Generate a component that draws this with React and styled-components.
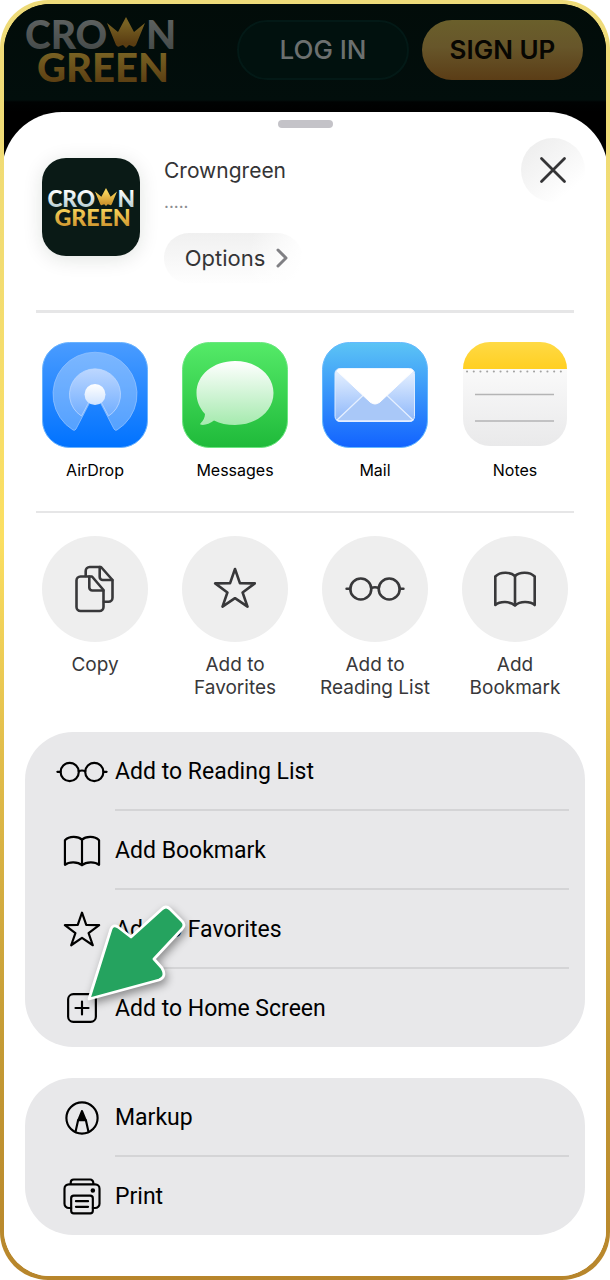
import React from "react";
import styled, { createGlobalStyle, css } from "styled-components";

const GlobalStyle = createGlobalStyle`
  *, *::before, *::after { box-sizing: border-box; }
  body {
    margin: 0;
    background: #fff;
    font-family: Inter, "Liberation Sans", sans-serif;
    color: #000;
  }
  button {
    font: inherit;
    color: inherit;
    border: 0;
    padding: 0;
    background: none;
    cursor: pointer;
  }
  ul { list-style: none; margin: 0; padding: 0; }
  svg { display: block; flex: none; overflow: visible; }
`;

const Frame = styled.div`
  min-height: 100vh;
  display: flex;
  padding: 4px;
  border-radius: 48px;
  background: linear-gradient(180deg, #eedb7a 0%, #f2dc72 20%, #fbdf62 42%, #e3bf4c 58%, #c49a34 82%, #b7852b 100%);
`;

const Screen = styled.div`
  flex: 1;
  min-width: 0;
  display: flex;
  flex-direction: column;
  overflow: hidden;
  border-radius: 46px;
  background: linear-gradient(#000 200px, #fff 200px);
`;

const SiteHeader = styled.header`
  height: 108px;
  padding: 13px 23px 0 22px;
  display: flex;
  justify-content: space-between;
  align-items: flex-start;
  background: linear-gradient(#020c09 0, #020e0c 96px, #000202 98px, #000 100%);
`;

const HeaderActions = styled.div`
  display: flex;
  gap: 13px;
  padding-top: 3px;
`;

const HeaderButton = styled.button`
  height: 60px;
  width: ${(p) => (p.$primary ? "161px" : "172px")};
  border-radius: 30px;
  font-size: 26px;
  line-height: 32px;
  ${(p) =>
    p.$primary
      ? css`
          font-weight: 600;
          color: #070602;
          background: linear-gradient(#6a5f2b, #67562a 45%, #5b3d16);
        `
      : css`
          font-weight: 500;
          color: #6c706f;
          background: #01110e;
          border: 2px solid #031916;
        `}
`;

const Sheet = styled.main`
  flex: 1;
  margin: 0 -2px;
  padding: 8px 23px 41px;
  border-radius: 60px 60px 0 0;
  background: #fff;
`;

const Handle = styled.div`
  width: 55px;
  height: 8px;
  margin: 0 auto;
  border-radius: 4px;
  background: #c4c3c8;
`;

const SiteInfo = styled.section`
  height: 182px;
  padding: 10px 0 0 17px;
  display: flex;
  align-items: flex-start;
`;

const AppIcon = styled.div`
  width: 98px;
  height: 98px;
  margin-top: 20px;
  display: grid;
  place-items: center;
  border-radius: 24px;
  background: #0a1a16;
  box-shadow: 0 3px 20px rgba(0, 30, 20, 0.12);
`;

const SiteText = styled.div`
  flex: 1;
  padding: 18px 0 0 24px;
`;

const SiteName = styled.h1`
  margin: 0;
  font-size: 21px;
  line-height: 30px;
  font-weight: 400;
  color: #343436;
`;

const SiteAddress = styled.p`
  margin: 0;
  font-size: 17px;
  line-height: 32px;
  color: #8c8c90;
`;

const OptionsButton = styled.button`
  height: 50px;
  width: 138px;
  margin-top: 15px;
  padding-left: 8px;
  display: flex;
  align-items: center;
  justify-content: center;
  gap: 10px;
  border-radius: 25px;
  font-size: 22px;
  color: #343436;
  background: linear-gradient(100deg, transparent 60%, #fff 98%), linear-gradient(#f0f0f0, #f7f7f7 50%, #fefefe);
`;

const CloseButton = styled.button`
  width: 64px;
  height: 64px;
  display: grid;
  place-items: center;
  border-radius: 32px;
  background: linear-gradient(140deg, #efefef 15%, #f7f7f7 50%, #fff 80%);
`;

const Divider = styled.hr`
  height: ${(p) => (p.$thin ? "2px" : "3px")};
  margin: 0 11px;
  border: 0;
  background: #e6e6e7;
`;

const Grid = styled.ul`
  display: grid;
  grid-template-columns: repeat(4, 1fr);
  padding: ${(p) => (p.$apps ? "29px 0 30px" : "23px 0 0")};
`;

const TileButton = styled.button`
  width: 100%;
  display: flex;
  flex-direction: column;
  align-items: center;
  gap: 11px;
  font-size: ${(p) => (p.$app ? "16px" : "19px")};
  line-height: ${(p) => (p.$app ? "22px" : "23px")};
  color: ${(p) => (p.$app ? "#000" : "#38383a")};
`;

const TileLabel = styled.span`
  min-height: ${(p) => p.$lines * 23}px;
  white-space: pre-line;
`;

const Circle = styled.span`
  width: 106px;
  height: 106px;
  display: grid;
  place-items: center;
  border-radius: 50%;
  background: #eeeeee;
`;

const Panel = styled.ul`
  margin-top: ${(p) => (p.$first ? "33px" : "31px")};
  border-radius: 48px;
  background: #e8e8ea;
`;

const PanelItem = styled.li`
  position: relative;
`;

const PanelButton = styled.button`
  width: 100%;
  height: 79px;
  padding: 0 16px 0 31px;
  display: flex;
  align-items: center;
  gap: 7px;
  text-align: left;
  font-family: Roboto, "Liberation Sans", sans-serif;
  font-size: 23px;
  ${PanelItem}:last-child & {
    height: 78px;
  }
`;

const PanelLabel = styled.span`
  flex: 1;
  align-self: stretch;
  display: flex;
  align-items: center;
  ${PanelItem}:not(:last-child) & {
    box-shadow: inset 0 -2px #d4d4d6;
  }
`;

const Pointer = styled.svg`
  position: absolute;
  top: -74px;
  left: 55px;
  z-index: 1;
  pointer-events: none;
  filter: drop-shadow(2px 4px 4px rgba(0, 0, 0, 0.4));
`;

function Logo({ width, id, dim }) {
  const gold = `${id}-gold`;
  const silver = `${id}-silver`;
  const word = { fontFamily: "Lato, 'Liberation Sans', sans-serif", fontWeight: 900 };
  return (
    <svg width={width} viewBox="0 0 150 67" role="img" aria-label="Crown Green">
      <defs>
        <linearGradient id={gold} x1="0" y1="0" x2="0" y2="1">
          <stop offset="0.2" stopColor={dim ? "#786223" : "#f8d45c"} />
          <stop offset="0.85" stopColor={dim ? "#5a3d12" : "#d09830"} />
        </linearGradient>
        <linearGradient id={silver} x1="0" y1="0" x2="0" y2="1">
          <stop offset="0.2" stopColor={dim ? "#5c605f" : "#ffffff"} />
          <stop offset="0.85" stopColor={dim ? "#464b4a" : "#b9cdd2"} />
        </linearGradient>
      </defs>
      <text x="-1" y="32" fontSize="39" style={word} fill={`url(#${silver})`}>CRO</text>
      <text x="120" y="32" fontSize="39" style={word} fill={`url(#${silver})`}>N</text>
      <path
        d="M81 6L92 15L100 0L108 15L119 6L110 28Q108 31 106 29L103 28L100 31L97 28L94 29Q92 31 90 28Z"
        fill={`url(#${gold})`}
      />
      <text x="11" y="65" fontSize="40" style={word} fill={`url(#${gold})`}>GREEN</text>
    </svg>
  );
}

const glyphs = {
  copy: (
    <>
      <path d="M27 17.5H15.5a4 4 0 0 0-4 4V48a4 4 0 0 0 4 4H34.5a4 4 0 0 0 4-4V31Z" />
      <path d="M24.3 17.5V28.5a3 3 0 0 0 3 3H38.3" />
      <path d="M20.7 17V12a4 4 0 0 1 4-4H36L47.5 21V38.7a4 4 0 0 1-4 4H39" />
      <path d="M34.7 8V18a3 3 0 0 0 3 3H47.3" />
    </>
  ),
  star: <path d="M30 10L34.9 24.2L49.8 24.4L37.6 33.5L42.5 47.6L30 39.2L17.5 47.6L22.4 33.5L10.2 24.4L25.1 24.2Z" />,
  glasses: (
    <>
      <circle cx="15.8" cy="30" r="10.5" />
      <circle cx="44.2" cy="30" r="10.5" />
      <path d="M26.2 29Q30 27.6 33.8 29M1.6 29.8H5.3M54.7 29.8H58.4" />
    </>
  ),
  book: (
    <>
      <path d="M30 17C26 13 15.5 12 10.3 17.5V46C15 42 25 42 30 46.5C35 42 45 42 49.7 46V17.5C44.5 12 34 13 30 17Z" />
      <path d="M30 17V46" />
    </>
  ),
  add: (
    <>
      <rect x="14" y="14" width="32" height="32" rx="6" />
      <path d="M30 22.5V37.5M22.5 30H37.5" />
    </>
  ),
  markup: (
    <>
      <circle cx="30" cy="30" r="18" />
      <path d="M22.5 46L25.5 32.5H34.5L37.5 46" />
      <path d="M30 22L26 32H34Z" fill="currentColor" />
    </>
  ),
  print: (
    <>
      <path d="M17 16V14.5a3.5 3.5 0 0 1 3.5-3.5H39.5a3.5 3.5 0 0 1 3.5 3.5V16" />
      <path d="M17.5 43.8H14.8a5 5 0 0 1-5-5V21.5a5 5 0 0 1 5-5H45.2a5 5 0 0 1 5 5V38.8a5 5 0 0 1-5 5H42.5" />
      <rect x="17.5" y="29.5" width="25" height="20.5" rx="3" />
      <path d="M23 36H37M23 42.5H37" />
      <circle cx="42.5" cy="23.7" r="1.4" fill="currentColor" />
    </>
  ),
};

function Glyph({ name, size, stroke }) {
  return (
    <svg
      width={size}
      height={size}
      viewBox="0 0 60 60"
      fill="none"
      stroke="currentColor"
      strokeWidth={stroke}
      strokeLinecap="round"
      strokeLinejoin="round"
      aria-hidden="true"
    >
      {glyphs[name]}
    </svg>
  );
}

function Gradient({ id, from, to }) {
  return (
    <linearGradient id={id} x1="0" y1="0" x2="0" y2="1">
      <stop offset="0" stopColor={from} />
      <stop offset="1" stopColor={to} />
    </linearGradient>
  );
}

const appArt = {
  AirDrop: (
    <>
      <defs>
        <Gradient id="air-bg" from="#4a9cff" to="#0072ff" />
        <Gradient id="air-mid" from="#cfe0ff" to="#76b0ff" />
        <Gradient id="air-dot" from="#ffffff" to="#cfe3ff" />
      </defs>
      <rect x="0.5" y="0.5" width="105" height="105" rx="27" fill="url(#air-bg)" stroke="#69b3ff" />
      <path d="M31 88A42 42 0 1 1 75 88Q73 89 72 87L58 60H48L34 87Q33 89 31 88Z" fill="#fff" fillOpacity="0.3" stroke="#8fc0ff" strokeWidth="0.8" />
      <path d="M39.5 74A25.5 25.5 0 1 1 66.5 74L59 60H47Z" fill="url(#air-mid)" fillOpacity="0.8" stroke="#bcd8ff" strokeWidth="0.8" />
      <circle cx="53" cy="52.5" r="10.5" fill="url(#air-dot)" />
    </>
  ),
  Messages: (
    <>
      <defs>
        <Gradient id="msg-bg" from="#55ea68" to="#1fba3a" />
        <Gradient id="msg-bubble" from="#ffffff" to="#a5eaae" />
      </defs>
      <rect x="0.5" y="0.5" width="105" height="105" rx="27" fill="url(#msg-bg)" stroke="#6be680" />
      <path
        d="M53 19C75 19 91.5 33 91.5 51C91.5 69 75 83 53 83C45 83 38 81.5 32 78.5C28 81.5 23 83.5 19 82.8C18 82.5 18 81.7 18.8 81C21.5 78.5 23 75 23 72C17.5 66 14.5 59 14.5 51C14.5 33 31 19 53 19Z"
        fill="url(#msg-bubble)"
      />
    </>
  ),
  Mail: (
    <>
      <defs>
        <Gradient id="mail-bg" from="#5cc4f5" to="#1263ff" />
        <Gradient id="mail-body" from="#eaf3ff" to="#8db7fa" />
      </defs>
      <rect x="0.5" y="0.5" width="105" height="105" rx="27" fill="url(#mail-bg)" stroke="#65b9ff" />
      <rect x="13" y="26.5" width="79.5" height="53" rx="5" fill="url(#mail-body)" stroke="#dcebff" />
      <path d="M15 78L42 52.5L53 58L64 52.5L91 78Q90 79 88 79H18Q16 79 15 78Z" fill="#a9c8f8" stroke="#e6f0ff" strokeWidth="1.3" />
      <path d="M15 29Q16 27 20 27H86Q90 27 91 29L58 60Q53 64 48 60Z" fill="#fff" stroke="#fff" />
    </>
  ),
  Notes: (
    <>
      <defs>
        <Gradient id="note-bg" from="#ffffff" to="#e9e9ea" />
        <Gradient id="note-top" from="#ffda45" to="#ffcf22" />
        <clipPath id="note-clip">
          <rect x="1" y="0" width="104" height="104" rx="27" />
        </clipPath>
      </defs>
      <g clipPath="url(#note-clip)">
        <rect width="106" height="105" fill="url(#note-bg)" />
        <rect width="106" height="27" fill="url(#note-top)" />
      </g>
      <path d="M5 29.5H103" stroke="#a3a3a3" strokeWidth="2" strokeLinecap="round" strokeDasharray="0.1 6.6" />
      <path d="M13 52.5H92M13 79H92" stroke="#b4b4b5" strokeWidth="1.6" />
    </>
  ),
};

const apps = ["AirDrop", "Messages", "Mail", "Notes"];

const shortcuts = [
  { icon: "copy", label: "Copy" },
  { icon: "star", label: "Add to\nFavorites" },
  { icon: "glasses", label: "Add to\nReading List" },
  { icon: "book", label: "Add\nBookmark" },
];

const panels = [
  [
    { icon: "glasses", label: "Add to Reading List" },
    { icon: "book", label: "Add Bookmark" },
    { icon: "star", label: "Add to Favorites" },
    { icon: "add", label: "Add to Home Screen", highlighted: true },
  ],
  [
    { icon: "markup", label: "Markup" },
    { icon: "print", label: "Print" },
  ],
];

export default function App() {
  return (
    <>
      <GlobalStyle />
      <Frame>
        <Screen>
          <SiteHeader>
            <Logo width={150} id="header-logo" dim />
            <HeaderActions>
              <HeaderButton type="button">LOG IN</HeaderButton>
              <HeaderButton type="button" $primary>SIGN UP</HeaderButton>
            </HeaderActions>
          </SiteHeader>
          <Sheet>
            <Handle />
            <SiteInfo>
              <AppIcon>
                <Logo width={87} id="app-logo" />
              </AppIcon>
              <SiteText>
                <SiteName>Crowngreen</SiteName>
                <SiteAddress>.....</SiteAddress>
                <OptionsButton type="button">
                  Options
                  <svg width="14" height="22" viewBox="0 0 14 22" fill="none" stroke="#808084" strokeWidth="3" strokeLinecap="round" strokeLinejoin="round" aria-hidden="true">
                    <path d="M3 3L11 11L3 19" />
                  </svg>
                </OptionsButton>
              </SiteText>
              <CloseButton type="button" aria-label="Close">
                <svg width="28" height="28" viewBox="0 0 28 28" stroke="#343436" strokeWidth="2.8" strokeLinecap="round" aria-hidden="true">
                  <path d="M2.5 2.5L25.5 25.5M25.5 2.5L2.5 25.5" />
                </svg>
              </CloseButton>
            </SiteInfo>
            <Divider />
            <Grid $apps>
              {apps.map((name) => (
                <li key={name}>
                  <TileButton type="button" $app>
                    <svg width="106" height="106" viewBox="0 0 106 106" fill="none" aria-hidden="true">
                      {appArt[name]}
                    </svg>
                    <span>{name}</span>
                  </TileButton>
                </li>
              ))}
            </Grid>
            <Divider $thin />
            <Grid>
              {shortcuts.map(({ icon, label }) => (
                <li key={label}>
                  <TileButton type="button">
                    <Circle>
                      <Glyph name={icon} size={60} stroke={2.6} />
                    </Circle>
                    <TileLabel $lines={2}>{label}</TileLabel>
                  </TileButton>
                </li>
              ))}
            </Grid>
            {panels.map((items, index) => (
              <Panel key={index} $first={index === 0}>
                {items.map(({ icon, label, highlighted }) => (
                  <PanelItem key={label}>
                    <PanelButton type="button">
                      <Glyph name={icon} size={52} stroke={2.5} />
                      <PanelLabel>{label}</PanelLabel>
                    </PanelButton>
                    {highlighted && (
                      <Pointer width="120" height="115" viewBox="80 895 120 115" aria-hidden="true">
                        <path
                          d="M89 999L111 929Q113 924 118 927L131 937L162 909Q166 905 170 909L182 921Q186 925 182 929L154 959L162 968Q167 977 159 980Z"
                          fill="#25a35f"
                          stroke="#fff"
                          strokeWidth="2.8"
                          strokeLinejoin="round"
                        />
                      </Pointer>
                    )}
                  </PanelItem>
                ))}
              </Panel>
            ))}
          </Sheet>
        </Screen>
      </Frame>
    </>
  );
}
